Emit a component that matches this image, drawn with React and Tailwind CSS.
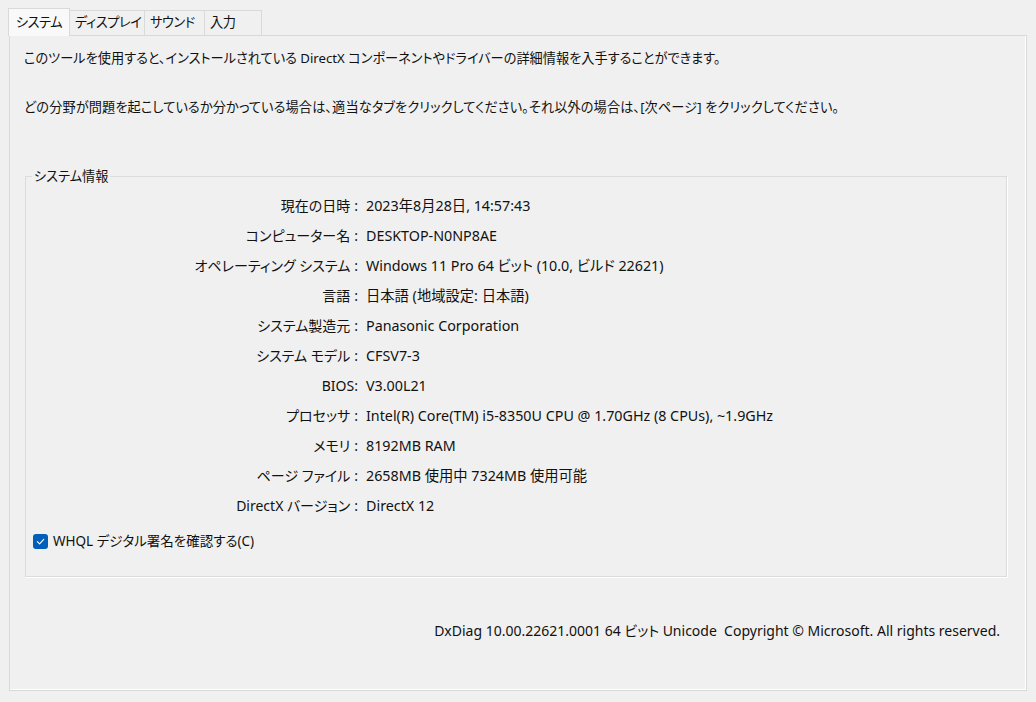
const rows = [
  ["現在の日時", "2023年8月28日, 14:57:43"],
  ["コンピューター名", "DESKTOP-N0NP8AE"],
  ["オペレーティング システム", "Windows 11 Pro 64 ビット (10.0, ビルド 22621)"],
  ["言語", "日本語 (地域設定: 日本語)"],
  ["システム製造元", "Panasonic Corporation"],
  ["システム モデル", "CFSV7-3"],
  ["BIOS", "V3.00L21"],
  ["プロセッサ", "Intel(R) Core(TM) i5-8350U CPU @ 1.70GHz (8 CPUs), ~1.9GHz"],
  ["メモリ", "8192MB RAM"],
  ["ページ ファイル", "2658MB 使用中 7324MB 使用可能"],
  ["DirectX バージョン", "DirectX 12"],
];

const tabs = [
  ["ディスプレイ", "w-[75px]"],
  ["サウンド", "w-[60px]"],
  ["入力", "w-[57px]"],
];

export default function App() {
  return (
    <div
      className="w-[1036px] h-[702px] bg-[#f0f0f0] text-[13.2px] text-[#111] overflow-hidden flex flex-col px-[9px] pt-[10px]"
      style={{ fontFamily: '"Noto Sans", "Noto Sans CJK JP", sans-serif', fontFeatureSettings: '"palt"' }}
    >
      {/* tab strip */}
      <div className="flex h-[25px] items-end relative z-10 -ml-px whitespace-nowrap tracking-[-0.4px]">
        <div className="w-[62px] h-[28px] -mb-px flex items-center justify-center bg-[#f9f9f9] border border-[#d9d9d9] border-b-0">
          システム
        </div>
        {tabs.map(([t, w]) => (
          <div
            key={t}
            className={`${w} h-[25px] pl-[5px] flex items-center bg-[#f0f0f0] border border-l-0 border-[#d9d9d9] border-b-0`}
          >
            {t}
          </div>
        ))}
      </div>

      {/* panel */}
      <div className="w-[1018px] h-[656px] border border-[#d9d9d9] bg-[#f0f0f0] shadow-[inset_-1px_-1px_0_#ffffff] flex flex-col px-[14px]">
        <p className="mt-[12px] leading-[20px]">
          このツールを使用すると、インストールされている DirectX コンポーネントやドライバーの詳細情報を入手することができます。
        </p>
        <p className="mt-[29px] leading-[20px] tracking-[0.1px]">
          どの分野が問題を起こしているか分かっている場合は、適当なタブをクリックしてください。それ以外の場合は、[次ページ] をクリックしてください。
        </p>

        {/* group box */}
        <div className="relative mt-[59px] ml-[1px] w-[982px] h-[401px] border border-[#dcdcdc] shadow-[1px_1px_0_#ffffff]">
          <span className="absolute -top-[11px] left-[6px] px-[2px] bg-[#f0f0f0] leading-[20px]">
            システム情報
          </span>
          <div className="flex flex-col pt-[19px] gap-[10px]">
            {rows.map(([k, v]) => (
              <div key={k} className="flex leading-[20px] text-[14px]">
                <div className="w-[332px] text-right">
                  {k}
                  <span className={/[A-Za-z]$/.test(k) ? "" : "ml-[4px]"}>:</span>
                </div>
                <div className="pl-[8px] text-[14.3px]">{v}</div>
              </div>
            ))}
          </div>
          <label className="flex items-center mt-[15px] ml-[7px] gap-[5px] leading-[20px] text-[13.5px]">
            <span className="w-[15px] h-[15px] rounded-[3px] bg-[#005fb8] flex items-center justify-center">
              <svg width="9" height="9" viewBox="0 0 10 10" fill="none">
                <path d="M1.5 5.2 L4 7.6 L8.6 2.6" stroke="#ffffff" strokeWidth="1.2" strokeLinecap="round" strokeLinejoin="round" />
              </svg>
            </span>
            WHQL デジタル署名を確認する(C)
          </label>
        </div>

        <div className="mt-[44px] pr-[12px] text-right leading-[20px] text-[14px]">
          DxDiag 10.00.22621.0001 64 ビット Unicode&nbsp; Copyright © Microsoft. All rights reserved.
        </div>
      </div>
    </div>
  );
}
